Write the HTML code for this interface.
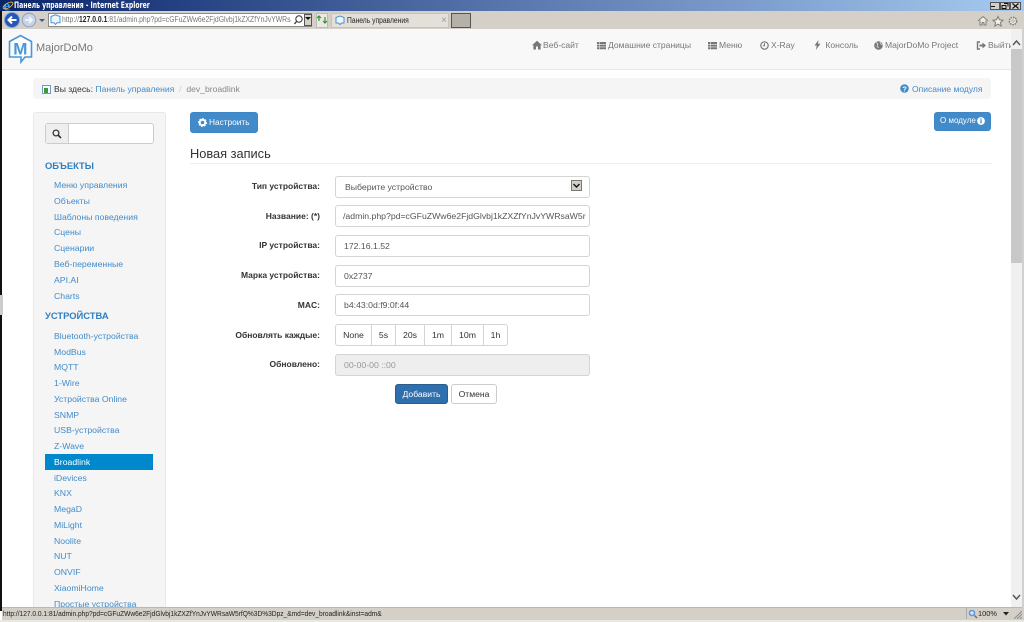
<!DOCTYPE html>
<html lang="ru"><head><meta charset="utf-8"><title>Панель управления</title>
<style>
html,body{margin:0;padding:0}
body{width:1024px;height:622px;overflow:hidden;position:relative;background:#fff;font-family:"Liberation Sans",sans-serif;font-size:8.6px;color:#333}
.a{position:absolute;white-space:nowrap}
.side{color:#428bca;left:54px;line-height:14px;font-size:8.7px}
.h{color:#2f7fc1;left:45px;font-weight:bold;font-size:9.4px;line-height:14px}
.lab{right:704px;font-weight:bold;font-size:8.5px;line-height:12px;color:#333}
.inp{left:335px;width:253px;height:20px;background:#fff;border:1px solid #d4d4d4;border-radius:3px;box-sizing:content-box;line-height:20px;text-indent:8px;color:#555;font-size:8.7px;overflow:hidden}
.nav{top:38px;color:#777;line-height:14px;font-size:8.55px}
.nav svg{vertical-align:-1.5px;margin-right:2px}
.seg{top:324px;height:20px;border:1px solid #d4d4d4;border-left:none;line-height:20px;text-align:center;color:#333;font-size:8.7px;background:#fff}
</style></head><body>

<div class="a" style="left:0;top:0;width:1024px;height:11px;background:linear-gradient(90deg,#0a246a,#a6caf0)"></div>
<div class="a" style="left:14px;top:-1px;line-height:12px;color:#fff;font-size:8.4px;font-weight:bold;font-family:'DejaVu Sans',sans-serif;transform:scaleX(.73);transform-origin:0 0">Панель управления - Internet Explorer</div>
<svg class="a" style="left:2px;top:0" width="12" height="12"><text x="1.5" y="10.5" font-size="15" font-weight="bold" font-family="Liberation Serif" fill="#3a9ae8">e</text><ellipse cx="6" cy="5.5" rx="5.5" ry="2.4" fill="none" stroke="#f0c040" stroke-width=".8" transform="rotate(-30 6 5.5)"/></svg>
<div class="a" style="left:990px;top:2px;width:8px;height:6px;background:#d4d0c8;border:1px solid #555"></div>
<div class="a" style="left:991px;top:6px;width:4px;height:1px;background:#111"></div>
<div class="a" style="left:1000px;top:2px;width:8px;height:6px;background:#d4d0c8;border:1px solid #555"></div>
<svg class="a" style="left:1001px;top:3px" width="8" height="6"><path d="M3 .5h4v3M1 2.5h4v3H1z" fill="none" stroke="#111"/></svg>
<div class="a" style="left:1010px;top:2px;width:9px;height:6px;background:#d4d0c8;border:1px solid #555"></div>
<svg class="a" style="left:1011px;top:3px" width="9" height="6"><path d="M1.5 .5l6 5M7.5 .5l-6 5" stroke="#111" stroke-width="1.2"/></svg>

<div class="a" style="left:0;top:11px;width:1024px;height:18px;background:#d4d0c8"></div>
<svg class="a" style="left:4px;top:12px" width="44" height="16">
<circle cx="8" cy="8" r="7.5" fill="#2458b8" stroke="#7ea3d8"/><path d="M12.5 8H5M8 4.5L4.5 8 8 11.5" fill="none" stroke="#fff" stroke-width="2"/>
<circle cx="25" cy="8" r="6.8" fill="#c7d3e6" stroke="#8da2c0"/><path d="M21 8h7M25 5l3 3-3 3" fill="none" stroke="#f4f6fa" stroke-width="1.8"/>
<path d="M35 7h6l-3 3z" fill="#2b5ea8"/></svg>
<div class="a" style="left:48px;top:13px;width:264px;height:14px;background:#fff;border:1px solid #8a8a8a;box-sizing:border-box"></div>
<div class="a" style="left:62px;top:14px;line-height:12px;font-size:8px;color:#777;width:270px;overflow:hidden;transform:scaleX(.85);transform-origin:0 0">http://<span style="color:#222;font-weight:bold">127.0.0.1</span>:81/admin.php?pd=cGFuZWw6e2FjdGlvbj1kZXZfYnJvYWRsa\</div>
<svg class="a" style="left:50px;top:14px" width="11" height="12"><path d="M1 2.5L5.5.8 10 2.5v6.3H7L5.5 10.5 4 8.8H1z" fill="#eef6fc" stroke="#4a94d4"/></svg>
<div class="a" style="left:291px;top:14px;width:12px;height:12px;background:#fff"></div>
<svg class="a" style="left:292px;top:14px" width="12" height="12"><circle cx="7" cy="5" r="3.2" fill="none" stroke="#333"/><path d="M4.5 7.5L2.5 10" stroke="#333" stroke-width="1.3"/></svg>
<div class="a" style="left:304px;top:14px;width:6px;height:10px;background:#d4d0c8;border:1px solid #555"></div>
<svg class="a" style="left:305px;top:17px" width="6" height="4"><path d="M0 0h6L3 3z" fill="#111"/></svg>
<div class="a" style="left:316px;top:13px;width:10px;height:13px;background:#ece9e2;border:1px solid #bbb"></div>
<svg class="a" style="left:316px;top:14px" width="11" height="11"><path d="M1 4l2-2 2 2M7 7l2 2 2-2M3 2v5M9 3v6" fill="none" stroke="#2c9a2c" stroke-width="1.2"/></svg>
<div class="a" style="left:331px;top:13px;width:118px;height:15px;background:#e3e0d9;border:1px solid #c6c3bb;box-sizing:border-box"></div>
<svg class="a" style="left:335px;top:15px" width="10" height="11"><path d="M1 2.5L5 1l4 1.5v5.5H6.5L5 9.5 3.5 8H1z" fill="#eef6fc" stroke="#4a94d4"/></svg>
<div class="a" style="left:347px;top:14px;line-height:13px;font-size:8px;color:#222;transform:scaleX(.84);transform-origin:0 0">Панель управления</div>
<div class="a" style="left:441px;top:14px;line-height:13px;font-size:10px;color:#999">×</div>
<div class="a" style="left:451px;top:13px;width:18px;height:13px;background:#b5b1a9;border:1px solid #555"></div>
<svg class="a" style="left:977px;top:15px" width="44" height="12"><path d="M1 6l5-4.5L11 6M3 5.5V10h2V7.5h2V10h2V5.5" fill="#f4f2ee" stroke="#7c7c78"/><path d="M21 1.5l1.5 3.3 3.5.4-2.6 2.3.8 3.5-3.2-1.9-3.2 1.9.8-3.5-2.6-2.3 3.5-.4z" fill="#f4f2ee" stroke="#7c7c78"/><circle cx="36" cy="6" r="3.6" fill="#f4f2ee" stroke="#7c7c78" stroke-width="1.6" stroke-dasharray="1.6 .8"/><circle cx="36" cy="6" r="1.2" fill="#fff" stroke="#7c7c78" stroke-width=".6"/></svg>

<div class="a" style="left:0;top:29px;width:1011px;height:40px;background:#f8f8f8;border-bottom:1px solid #e7e7e7"></div>
<div class="a" style="left:0;top:11px;width:2px;height:600px;background:#111;z-index:5"></div>
<div class="a" style="left:0;top:295px;width:3px;height:20px;background:#ccc;z-index:6"></div>
<svg class="a" style="left:8px;top:34px" width="25" height="30"><path d="M1.5 7.5L12.5 1.5 23.5 7.5V23H17L13 28V23H1.5z" fill="#fafcfe" stroke="#4a96d6" stroke-width="1.6"/><text x="12.3" y="20.5" text-anchor="middle" font-size="17" font-family="Liberation Sans" fill="#4a96d6" font-weight="bold">M</text></svg>
<div class="a" style="left:36px;top:40px;line-height:16px;font-size:11px;color:#777">MajorDoMo</div>

<div class="a nav" style="left:532px"><svg width="10" height="10" viewBox="0 0 10 10" style="margin-right:1px"><path d="M5 .8L0 5.3h1.4V9.5h2.6V6.5h2v3h2.6V5.3H10z" fill="#777"/></svg>Веб-сайт</div>
<div class="a nav" style="left:597px"><svg width="9" height="9" viewBox="0 0 9 9"><path d="M0 1h2.5v2H0zM3 1h6v2H3zM0 3.6h2.5v2H0zM3 3.6h6v2H3zM0 6.2h2.5v2H0zM3 6.2h6v2H3z" fill="#777"/></svg>Домашние страницы</div>
<div class="a nav" style="left:708px"><svg width="9" height="9" viewBox="0 0 9 9"><path d="M0 1h2.5v2H0zM3 1h6v2H3zM0 3.6h2.5v2H0zM3 3.6h6v2H3zM0 6.2h2.5v2H0zM3 6.2h6v2H3z" fill="#777"/></svg>Меню</div>
<div class="a nav" style="left:760px"><svg width="9" height="9" viewBox="0 0 9 9"><circle cx="4.5" cy="4.5" r="3.7" fill="none" stroke="#777" stroke-width="1.2"/><path d="M4.5 2.2v2.5H2.8" fill="none" stroke="#777"/></svg>X-Ray</div>
<div class="a nav" style="left:814px"><svg width="7" height="10" viewBox="0 0 7 10"><path d="M4.5 0L.5 5.5h2.3L1.8 10 6.5 3.8H4z" fill="#777"/></svg> Консоль</div>
<div class="a nav" style="left:874px"><svg width="9" height="9" viewBox="0 0 9 9"><circle cx="4.5" cy="4.5" r="4.3" fill="#777"/><path d="M2 1.5l2 1.5-1 2 1.5 2M6 1l1 2 1.5 1" fill="none" stroke="#f8f8f8" stroke-width=".7"/></svg>MajorDoMo Project</div>
<div class="a nav" style="left:976px"><svg width="10" height="9" viewBox="0 0 10 9"><path d="M4 1H1.5v7H4" fill="none" stroke="#777" stroke-width="1.4"/><path d="M3.5 3.5h3V1.5L10 4.5 6.5 7.5V5.5h-3z" fill="#777"/></svg>Выйти</div>

<div class="a" style="left:33px;top:78px;width:958px;height:21px;background:#f5f5f5;border-radius:3px"></div>
<svg class="a" style="left:42px;top:85px" width="9" height="9"><rect x=".5" y=".5" width="8" height="8" fill="#fff" stroke="#6f9bbe"/><rect x="2" y="3" width="4" height="5" fill="#3b9a3b"/></svg>
<div class="a" style="left:54px;top:82px;line-height:14px;font-size:8.6px"><span>Вы здесь: </span><span style="color:#428bca">Панель управления</span><span style="color:#ccc">&nbsp;&nbsp;/&nbsp;&nbsp;</span><span style="color:#888">dev_broadlink</span></div>
<svg class="a" style="left:900px;top:84px" width="9" height="9"><circle cx="4.5" cy="4.5" r="4.3" fill="#428bca"/><text x="4.5" y="7.4" text-anchor="middle" font-size="7.5" font-weight="bold" fill="#fff" font-family="Liberation Sans">?</text></svg>
<div class="a" style="left:912px;top:82px;line-height:14px;color:#428bca;font-size:8.5px">Описание модуля</div>

<div class="a" style="left:33px;top:112px;width:133px;height:510px;background:#f5f5f5;border:1px solid #e8e8e8;border-bottom:none;border-radius:3px 3px 0 0;box-sizing:border-box"></div>
<div class="a" style="left:45px;top:123px;width:109px;height:21px;background:#fff;border:1px solid #ccc;border-radius:3px;box-sizing:border-box"></div>
<div class="a" style="left:46px;top:124px;width:22px;height:19px;background:#eee;border-right:1px solid #ccc"></div>
<svg class="a" style="left:52px;top:129px" width="10" height="10"><circle cx="4" cy="4" r="2.9" fill="none" stroke="#333" stroke-width="1.3"/><path d="M6 6l3 3" stroke="#333" stroke-width="1.6"/></svg>

<div class="a h" style="top:159px">ОБЪЕКТЫ</div>
<div class="a side" style="top:178px">Меню управления</div>
<div class="a side" style="top:194px">Объекты</div>
<div class="a side" style="top:210px">Шаблоны поведения</div>
<div class="a side" style="top:225px">Сцены</div>
<div class="a side" style="top:241px">Сценарии</div>
<div class="a side" style="top:257px">Веб-переменные</div>
<div class="a side" style="top:273px">API.AI</div>
<div class="a side" style="top:289px">Charts</div>
<div class="a h" style="top:309px">УСТРОЙСТВА</div>
<div class="a side" style="top:329px">Bluetooth-устройства</div>
<div class="a side" style="top:345px">ModBus</div>
<div class="a side" style="top:360px">MQTT</div>
<div class="a side" style="top:376px">1-Wire</div>
<div class="a side" style="top:392px">Устройства Online</div>
<div class="a side" style="top:408px">SNMP</div>
<div class="a side" style="top:423px">USB-устройства</div>
<div class="a side" style="top:439px">Z-Wave</div>
<div class="a" style="left:45px;top:454px;width:108px;height:16px;background:#0088cc"></div>
<div class="a side" style="top:455px;color:#fff">Broadlink</div>
<div class="a side" style="top:471px">iDevices</div>
<div class="a side" style="top:486px">KNX</div>
<div class="a side" style="top:502px">MegaD</div>
<div class="a side" style="top:518px">MiLight</div>
<div class="a side" style="top:534px">Noolite</div>
<div class="a side" style="top:549px">NUT</div>
<div class="a side" style="top:565px">ONVIF</div>
<div class="a side" style="top:581px">XiaomiHome</div>
<div class="a side" style="top:597px">Простые устройства</div>

<div class="a" style="left:190px;top:112px;width:68px;height:21px;background:#428bca;border:1px solid #3f86c4;border-radius:3px;box-sizing:border-box"></div>
<svg class="a" style="left:198px;top:118px" width="9" height="9"><circle cx="4.5" cy="4.5" r="2.8" fill="none" stroke="#fff" stroke-width="2"/><circle cx="4.5" cy="4.5" r="3.9" fill="none" stroke="#fff" stroke-width="1.2" stroke-dasharray="1.5 1.5"/></svg>
<div class="a" style="left:209px;top:115px;line-height:15px;color:#fff;font-size:8.3px">Настроить</div>
<div class="a" style="left:934px;top:112px;width:57px;height:19px;background:#428bca;border:1px solid #3f86c4;border-radius:3px;box-sizing:border-box"></div>
<div class="a" style="left:940px;top:114px;line-height:14px;color:#fff;font-size:8px">О модуле</div>
<svg class="a" style="left:977px;top:117px" width="8" height="8"><circle cx="4" cy="4" r="3.9" fill="#fff"/><rect x="3.3" y="3.2" width="1.4" height="3" fill="#428bca"/><rect x="3.3" y="1.5" width="1.4" height="1.2" fill="#428bca"/></svg>

<div class="a" style="left:190px;top:146px;line-height:16px;font-size:12.8px;color:#333">Новая запись</div>
<div class="a" style="left:190px;top:163px;width:802px;height:1px;background:#eee"></div>

<div class="a lab" style="top:180px">Тип устройства:</div>
<div class="a inp" style="top:176px;text-indent:9px">Выберите устройство</div>
<div class="a" style="left:571px;top:180px;width:11px;height:11px;background:#d4d0c8;border:1px solid #777;box-sizing:border-box"></div>
<svg class="a" style="left:572px;top:182px" width="9" height="8"><path d="M1.5 2l3 3 3-3" fill="none" stroke="#111" stroke-width="1.4"/></svg>
<div class="a lab" style="top:210px">Название: (*)</div>
<div class="a inp" style="top:205px;text-indent:7px">/admin.php?pd=cGFuZWw6e2FjdGlvbj1kZXZfYnJvYWRsaW5r</div>
<div class="a lab" style="top:239px">IP устройства:</div>
<div class="a inp" style="top:235px;text-indent:8px">172.16.1.52</div>
<div class="a lab" style="top:269px">Марка устройства:</div>
<div class="a inp" style="top:265px;text-indent:8px">0x2737</div>
<div class="a lab" style="top:299px">MAC:</div>
<div class="a inp" style="top:294px;text-indent:8px">b4:43:0d:f9:0f:44</div>
<div class="a lab" style="top:329px">Обновлять каждые:</div>
<div class="a seg" style="left:335px;width:35px;border-left:1px solid #d4d4d4;border-radius:3px 0 0 3px">None</div>
<div class="a seg" style="left:372px;width:23px">5s</div>
<div class="a seg" style="left:396px;width:28px">20s</div>
<div class="a seg" style="left:425px;width:26px">1m</div>
<div class="a seg" style="left:452px;width:31px">10m</div>
<div class="a seg" style="left:484px;width:23px;border-radius:0 3px 3px 0">1h</div>
<div class="a lab" style="top:358px">Обновлено:</div>
<div class="a inp" style="top:354px;background:#eee;color:#999;text-indent:8px">00-00-00 ::00</div>
<div class="a" style="left:395px;top:384px;width:53px;height:20px;background:#2f6fad;border:1px solid #285e8e;border-radius:3px;box-sizing:border-box;line-height:19px;text-align:center;color:#fff;font-size:8.6px">Добавить</div>
<div class="a" style="left:451px;top:384px;width:46px;height:20px;background:#fff;border:1px solid #ccc;border-radius:3px;box-sizing:border-box;line-height:19px;text-align:center;color:#333;font-size:8.6px">Отмена</div>

<div class="a" style="left:1011px;top:29px;width:11px;height:578px;background:#f0f0f0"></div>
<div class="a" style="left:1011px;top:49px;width:11px;height:214px;background:#c8c8c8"></div>
<svg class="a" style="left:1011px;top:39px" width="11" height="8"><path d="M2 6l3.5-4L9 6" fill="none" stroke="#555" stroke-width="1.4"/></svg>
<svg class="a" style="left:1011px;top:593px" width="11" height="8"><path d="M2 2l3.5 4L9 2" fill="none" stroke="#555" stroke-width="1.4"/></svg>
<div class="a" style="left:1022px;top:29px;width:2px;height:593px;background:#d0d0d0"></div>

<div class="a" style="left:2px;top:607px;width:1020px;height:13px;background:#d4d0c8;border-top:1px solid #bbb7ae;box-sizing:border-box"></div>
<div class="a" style="left:3px;top:608px;line-height:12px;font-size:7.7px;color:#222;transform:scaleX(.86);transform-origin:0 0">http://127.0.0.1:81/admin.php?pd=cGFuZWw6e2FjdGlvbj1kZXZfYnJvYWRsaW5rfQ%3D%3Dpz_&amp;md=dev_broadlink&amp;inst=adm&amp;</div>
<div class="a" style="left:966px;top:608px;width:1px;height:11px;background:#aaa"></div>
<svg class="a" style="left:968px;top:609px" width="10" height="10"><circle cx="4" cy="4" r="3.3" fill="#5d9bde"/><path d="M2 4h4M4 2v4" stroke="#fff"/><path d="M6.5 6.5L9 9" stroke="#a0602c" stroke-width="1.4"/></svg>
<div class="a" style="left:978px;top:608px;line-height:12px;font-size:7.4px;color:#222">100%</div>
<svg class="a" style="left:1003px;top:612px" width="6" height="4"><path d="M0 0h6L3 3.5z" fill="#222"/></svg>
<svg class="a" style="left:1014px;top:611px" width="8" height="8"><path d="M0 8L8 0M3 8L8 3M6 8L8 6" stroke="#8f8c84"/></svg>
<div class="a" style="left:0;top:620px;width:1024px;height:2px;background:#e9e7e2"></div>
</body></html>
